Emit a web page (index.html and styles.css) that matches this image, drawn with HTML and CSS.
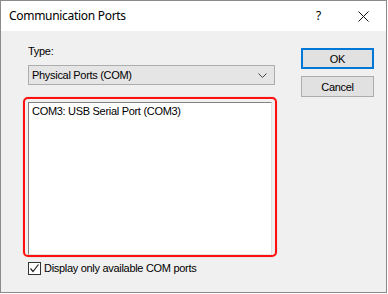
FILE: index.html
```html
<!DOCTYPE html>
<html lang="en">
<head>
    <meta charset="UTF-8">
    <title>Communication Ports</title>
    <link rel="stylesheet" href="styles.css">
</head>
<body>
    <div class="window">
        <div class="titlebar">
            <span class="title">Communication Ports</span>
            <span class="help">?</span>
            <span class="close">
                <svg width="11" height="11" viewBox="0 0 11 11">
                    <path d="M0.5 0.5 L10.5 10.5 M10.5 0.5 L0.5 10.5" stroke="#111" stroke-width="1" fill="none"/>
                </svg>
            </span>
        </div>
        <div class="content">
            <div class="left">
                <div class="label">Type:</div>
                <div class="combo">
                    <span>Physical Ports (COM)</span>
                    <svg class="chevron" width="9" height="5" viewBox="0 0 9 5">
                        <path d="M0.5 0.5 L4.5 4.5 L8.5 0.5" stroke="#444" stroke-width="1" fill="none"/>
                    </svg>
                </div>
                <div class="highlight">
                    <div class="listbox">
                        <div class="item">COM3: USB Serial Port (COM3)</div>
                    </div>
                </div>
                <label class="check">
                    <span class="box">
                        <svg width="11" height="11" viewBox="0 0 11 11">
                            <path d="M1.5 5.5 L4 8.5 L9.5 1.5" stroke="#222" stroke-width="1.2" fill="none"/>
                        </svg>
                    </span>
                    Display only available COM ports
                </label>
            </div>
            <div class="right">
                <button class="btn btn-default">OK</button>
                <button class="btn">Cancel</button>
            </div>
        </div>
    </div>
</body>
</html>
```

FILE: styles.css
```css
body {
    margin: 0;
    background: #ffffff;
    font-family: "Liberation Sans", Arial, sans-serif;
    font-size: 11px;
    letter-spacing: -0.3px;
    color: #000;
}
.window {
    width: 385px;
    height: 291px;
    border: 1px solid #8a8a8a;
    display: flex;
    flex-direction: column;
}
.titlebar {
    height: 30px;
    background: #fff;
    display: flex;
    align-items: center;
    padding-left: 8px;
    font-family: "Noto Sans", "Open Sans", sans-serif;
    font-size: 12px;
}
.title {
    flex: 1;
    margin-top: -1px;
}
.help {
    width: 10px;
    margin-right: 32px;
    margin-top: -1px;
}
.close {
    display: flex;
    margin-right: 17px;
}
.content {
    flex: 1;
    background: #f0f0f0;
    display: flex;
    padding: 14px 0 0 22px;
}
.left {
    width: 254px;
    display: flex;
    flex-direction: column;
}
.label {
    margin-left: 5px;
    line-height: 13px;
}
.combo {
    margin: 7px 0 0 5px;
    width: 242px;
    height: 18px;
    border: 1px solid #adadad;
    background: #e5e5e5;
    display: flex;
    align-items: center;
    padding-left: 3px;
    box-sizing: content-box;
    line-height: 13px;
}
.combo span {
    flex: 1;
}
.chevron {
    margin-right: 7px;
}
.highlight {
    margin-top: 12px;
    height: 151px;
    border: 2px solid #ff1010;
    border-radius: 5px;
    box-shadow: 0 0 1px rgba(255, 0, 0, 0.6);
    padding: 3px 2px 2px 3px;
}
.listbox {
    height: 147px;
    border: 1px solid;
    border-color: #828282 #e3e3e3 #e3e3e3 #828282;
    background: #fff;
    padding: 2px 3px;
    box-sizing: content-box;
    width: 236px;
}
.item {
    line-height: 13px;
}
.check {
    margin: 5px 0 0 5px;
    display: flex;
    align-items: center;
    line-height: 13px;
}
.box {
    width: 11px;
    height: 11px;
    border: 1px solid #333;
    background: #fff;
    margin-right: 3px;
    display: flex;
}
.right {
    margin-left: 24px;
    padding-top: 3px;
    display: flex;
    flex-direction: column;
    gap: 7px;
}
.btn {
    width: 73px;
    height: 21px;
    border: 1px solid #adadad;
    background: #e1e1e1;
    font-family: "Liberation Sans", Arial, sans-serif;
    font-size: 11px;
    letter-spacing: -0.3px;
    color: #000;
    padding: 0;
}
.btn-default {
    border: 2px solid #0078d7;
}
```
